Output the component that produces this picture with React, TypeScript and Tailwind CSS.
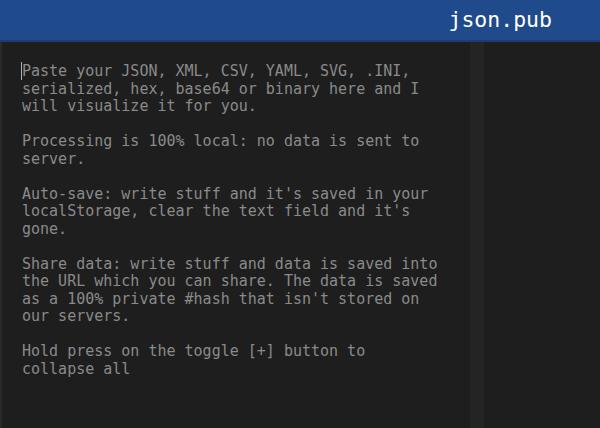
const placeholder = `Paste your JSON, XML, CSV, YAML, SVG, .INI,
serialized, hex, base64 or binary here and I
will visualize it for you.

Processing is 100% local: no data is sent to
server.

Auto-save: write stuff and it's saved in your
localStorage, clear the text field and it's
gone.

Share data: write stuff and data is saved into
the URL which you can share. The data is saved
as a 100% private #hash that isn't stored on
our servers.

Hold press on the toggle [+] button to
collapse all`

export default function App() {
  return (
    <div className="flex h-[428px] w-[600px] flex-col overflow-hidden bg-[#1e1e1e] font-['DejaVu_Sans_Mono',monospace]">
      {/* Header */}
      <header className="flex h-[42px] shrink-0 items-center justify-end border-b-2 border-[#1b3d73] bg-[#1f4a8c] pr-[48px]">
        <span className="text-[21.5px] font-normal leading-none text-white">json.pub</span>
      </header>

      <div className="flex flex-1">
        {/* Editor */}
        <div className="relative flex flex-1 border-l-2 border-[#2a2a2a]">
          <textarea
            className="h-full w-full resize-none bg-transparent pl-5 pt-[21px] text-[15px] leading-[17.5px] text-[#d0d0d0] caret-[#9a9a9a] outline-none placeholder:text-[#8a8a8a]"
            placeholder={placeholder}
            spellCheck={false}
            autoFocus
          />
          {/* blinking caret */}
          <span className="pointer-events-none absolute left-[19px] top-[20px] h-[18px] w-px bg-[#b0b0b0]" />
        </div>
        {/* Gutter */}
        <div className="w-[14px] shrink-0 bg-[#242424]" />
        {/* Viewer */}
        <div className="w-[116px] shrink-0 bg-[#1e1e1e]" />
      </div>
    </div>
  )
}
